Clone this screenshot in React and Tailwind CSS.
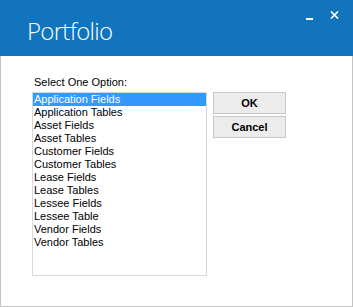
import React, { useState } from 'react';

const options = [
  'Application Fields',
  'Application Tables',
  'Asset Fields',
  'Asset Tables',
  'Customer Fields',
  'Customer Tables',
  'Lease Fields',
  'Lease Tables',
  'Lessee Fields',
  'Lessee Table',
  'Vendor Fields',
  'Vendor Tables',
];

const App = () => {
  const [selected, setSelected] = useState(0);

  return (
    <div className="w-[353px] h-[307px] bg-white flex flex-col overflow-hidden">
      {/* Title bar */}
      <div className="h-[56px] bg-[#1174bd] flex shrink-0">
        <div className="flex-1 pl-[27px] pt-[16px] text-white text-[24px] leading-[30px] font-light font-['Open_Sans',sans-serif] tracking-[-0.7px]">
          Portfolio
        </div>
        <div className="flex items-start pt-[11px] pr-[14px] gap-[17px]">
          <div className="w-[7px] h-[2px] bg-white mt-[7px]" />
          <svg width="9" height="8" viewBox="0 0 9 8" className="text-white">
            <path d="M1 0.5 L8 7.5 M8 0.5 L1 7.5" stroke="currentColor" strokeWidth="1.6" />
          </svg>
        </div>
      </div>

      {/* Body */}
      <div className="flex-1 border-x border-b border-[#c4c4c4] pl-[31px] pt-[20px] font-['Liberation_Sans',sans-serif] text-[11px] text-black">
        <div className="leading-[13px] pl-[2px] mb-[3px]">Select One Option:</div>
        <div className="flex gap-[6px]">
          <div className="w-[175px] h-[184px] border border-[#d8d8d8] bg-white">
            {options.map((opt, i) => (
              <div
                key={opt}
                onClick={() => setSelected(i)}
                className={`h-[13px] leading-[13px] pl-[1px] cursor-default ${
                  i === selected ? 'bg-[#3399ff] text-white' : ''
                }`}
              >
                {opt}
              </div>
            ))}
          </div>
          <div className="flex flex-col gap-[2px]">
            <button className="w-[73px] h-[22px] bg-[#ececec] border border-[#c8c8c8] font-bold text-[11px]">
              OK
            </button>
            <button className="w-[73px] h-[22px] bg-[#ececec] border border-[#c8c8c8] font-bold text-[11px]">
              Cancel
            </button>
          </div>
        </div>
      </div>
    </div>
  );
};

export default App;
